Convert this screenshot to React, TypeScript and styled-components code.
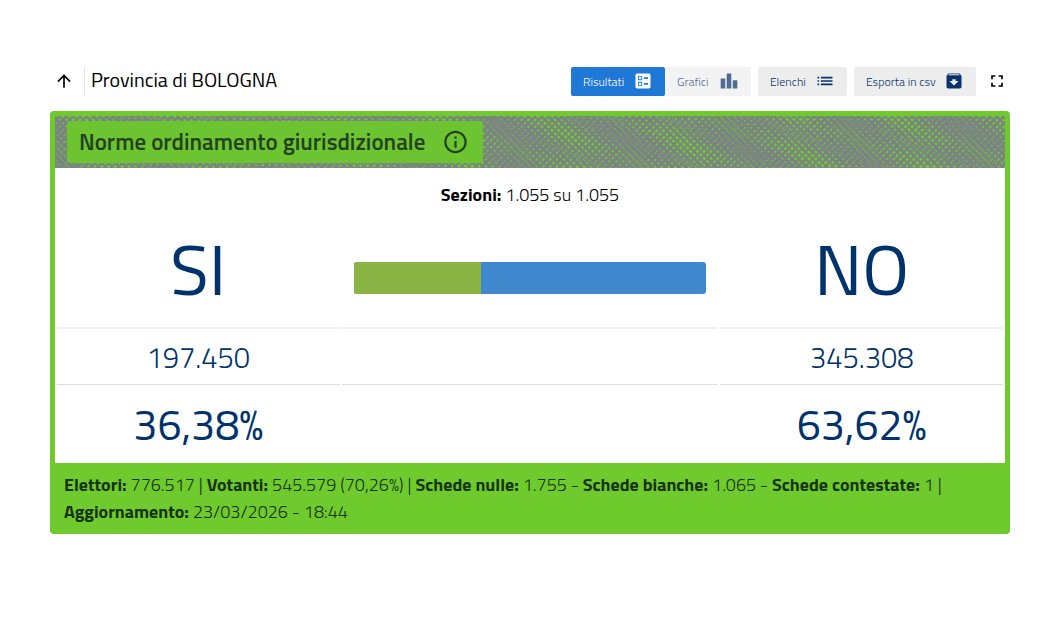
import React from "react";
import styled, { createGlobalStyle } from "styled-components";
import {
  MdArchive,
  MdArrowUpward,
  MdBallot,
  MdFullscreen,
  MdInfoOutline,
  MdLeaderboard,
  MdList,
} from "react-icons/md";

const GlobalStyle = createGlobalStyle`
  * { box-sizing: border-box; }
  body {
    margin: 0;
    background: #fff;
    color: #000;
    font-family: "Titillium Web", Roboto, "Liberation Sans", sans-serif;
    font-weight: 300;
  }
  button { font-family: inherit; cursor: pointer; }
  b { font-weight: 700; }
`;

const Page = styled.main`
  padding: 66px 48px 100px 50px;
`;

const TopBar = styled.header`
  display: flex;
  align-items: center;
  justify-content: space-between;
  height: 30px;
  margin-bottom: 15px;
`;

const Place = styled.div`
  display: flex;
  align-items: center;
`;

const IconButton = styled.button`
  display: flex;
  align-items: center;
  justify-content: center;
  width: 27px;
  height: 28px;
  padding: 0;
  border: 0;
  background: none;
  color: #000;
`;

const PlaceName = styled.h1`
  margin: 0 0 0 7px;
  padding: 0 0 2px 6px;
  border-left: 1px solid #e4e4e4;
  font-size: 20px;
  line-height: 26px;
  font-weight: 400;
  white-space: nowrap;
`;

const Actions = styled.nav`
  display: flex;
  align-items: center;
  gap: 7px;
`;

const Switch = styled.div`
  display: flex;
`;

const ActionButton = styled.button<{ $tone?: "active" | "muted"; $width: number }>`
  display: flex;
  align-items: center;
  justify-content: space-between;
  width: ${(p) => p.$width}px;
  height: 29px;
  padding: 0 12px;
  border: 0;
  border-radius: 2px;
  font-size: 12px;
  font-weight: 300;
  white-space: nowrap;
  background: ${(p) => (p.$tone === "active" ? "#1f78d6" : p.$tone === "muted" ? "#f3f3f3" : "#ededed")};
  color: ${(p) => (p.$tone === "active" ? "#fff" : p.$tone === "muted" ? "#4d6d92" : "#06336b")};
`;

const Card = styled.section`
  border: 5px solid #6fca2e;
  border-radius: 4px;
  background: #6fca2e;
`;

const Banner = styled.div`
  display: grid;
  height: 52px;
  overflow: hidden;
  align-items: center;
  > * { grid-area: 1 / 1; }
`;

const Hatch = styled.svg`
  display: block;
  width: 100%;
  height: 52px;
`;

const Question = styled.div`
  display: flex;
  align-items: center;
  justify-content: space-between;
  justify-self: start;
  height: 42px;
  width: 416px;
  margin-left: 12px;
  padding: 0 14px 0 12px;
  border-radius: 3px;
  background: #6cc431;
  color: #24421f;
`;

const QuestionTitle = styled.h2`
  margin: 0;
  padding-bottom: 2px;
  font-size: 23px;
  font-weight: 600;
  white-space: nowrap;
`;

const InfoButton = styled(IconButton)`
  color: #24421f;
`;

const Results = styled.div`
  background: #fff;
`;

const Sections = styled.p`
  margin: 0;
  padding-top: 14px;
  font-size: 18px;
  line-height: 26px;
  text-align: center;
`;

const Table = styled.table`
  width: 100%;
  table-layout: fixed;
  border-spacing: 2px 0;
  color: #00336b;
  text-align: center;
`;

const Cell = styled.td<{ $size: number; $height: number; $weight: number; $last?: boolean }>`
  height: ${(p) => p.$height}px;
  padding: 0 12px;
  border-bottom: ${(p) => (p.$last ? "0" : "1px solid #dedede")};
  font-size: ${(p) => p.$size}px;
  font-weight: ${(p) => p.$weight};
`;

const Choice = styled.th<{ $width: string }>`
  width: ${(p) => p.$width};
  height: 121px;
  padding: 2px 12px 0;
  border-bottom: 2px solid #f0f0f0;
  font-size: 71px;
  line-height: 80px;
  font-weight: 400;
`;

const Bar = styled.div`
  display: flex;
  height: 32px;
  margin-top: 18px;
  border-radius: 3px;
  overflow: hidden;
  background: #4089cf;
`;

const YesPart = styled.div`
  background: #8ab544;
`;

const Summary = styled.p`
  margin: 0;
  padding: 8px 9px 4px;
  color: #17330f;
  font-size: 18px;
  line-height: 27px;
`;

/* Detuned line sets in each direction, so the weave opens and closes along the band. */
const families = [
  { step: 7, lean: 48 },
  { step: 6.5, lean: 54 },
  { step: 7, lean: -54 },
  { step: 6.6, lean: -49 },
];

const hatchPath = families
  .map(({ step, lean }) => {
    const lines: string[] = [];
    for (let x = -80; x < 1080; x += step) {
      lines.push(`M${x.toFixed(1)} 0L${(x + lean).toFixed(1)} 52`);
    }
    return lines.join("");
  })
  .join("");

const yesShare = 36;

export default function App() {
  return (
    <>
      <GlobalStyle />
      <Page>
        <TopBar>
          <Place>
            <IconButton aria-label="Livello superiore">
              <MdArrowUpward size={20} />
            </IconButton>
            <PlaceName>Provincia di BOLOGNA</PlaceName>
          </Place>
          <Actions>
            <Switch>
              <ActionButton $tone="active" $width={94}>
                Risultati <MdBallot size={20} />
              </ActionButton>
              <ActionButton $tone="muted" $width={86}>
                Grafici <MdLeaderboard size={20} />
              </ActionButton>
            </Switch>
            <ActionButton $width={89}>
              Elenchi <MdList size={20} />
            </ActionButton>
            <ActionButton $width={122}>
              Esporta in csv <MdArchive size={20} />
            </ActionButton>
            <IconButton aria-label="Schermo intero">
              <MdFullscreen size={20} />
            </IconButton>
          </Actions>
        </TopBar>

        <Card>
          <Banner>
            <Hatch viewBox="0 0 950 52" preserveAspectRatio="xMidYMid slice" aria-hidden="true">
              <path d={hatchPath} fill="none" stroke="#7c8187" strokeWidth="1.6" />
            </Hatch>
            <Question>
              <QuestionTitle>Norme ordinamento giurisdizionale</QuestionTitle>
              <InfoButton aria-label="Informazioni">
                <MdInfoOutline size={30} />
              </InfoButton>
            </Question>
          </Banner>

          <Results>
            <Sections>
              <b>Sezioni:</b> 1.055 su 1.055
            </Sections>
            <Table>
              <thead>
                <tr>
                  <Choice scope="col" $width="30%">SI</Choice>
                  <Choice as="td" $width="40%">
                    <Bar>
                      <YesPart style={{ width: `${yesShare}%` }} />
                    </Bar>
                  </Choice>
                  <Choice scope="col" $width="30%">NO</Choice>
                </tr>
              </thead>
              <tbody>
                <tr>
                  <Cell $size={29} $height={56} $weight={300}>197.450</Cell>
                  <Cell $size={29} $height={56} $weight={300} />
                  <Cell $size={29} $height={56} $weight={300}>345.308</Cell>
                </tr>
                <tr>
                  <Cell $size={43} $height={78} $weight={400} $last>36,38%</Cell>
                  <Cell $size={43} $height={78} $weight={400} $last />
                  <Cell $size={43} $height={78} $weight={400} $last>63,62%</Cell>
                </tr>
              </tbody>
            </Table>
          </Results>

          <Summary>
            <b>Elettori:</b> 776.517 | <b>Votanti:</b> 545.579 (70,26%) | <b>Schede nulle:</b> 1.755 -{" "}
            <b>Schede bianche:</b> 1.065 - <b>Schede contestate:</b> 1 | <b>Aggiornamento:</b> 23/03/2026 - 18:44
          </Summary>
        </Card>
      </Page>
    </>
  );
}
